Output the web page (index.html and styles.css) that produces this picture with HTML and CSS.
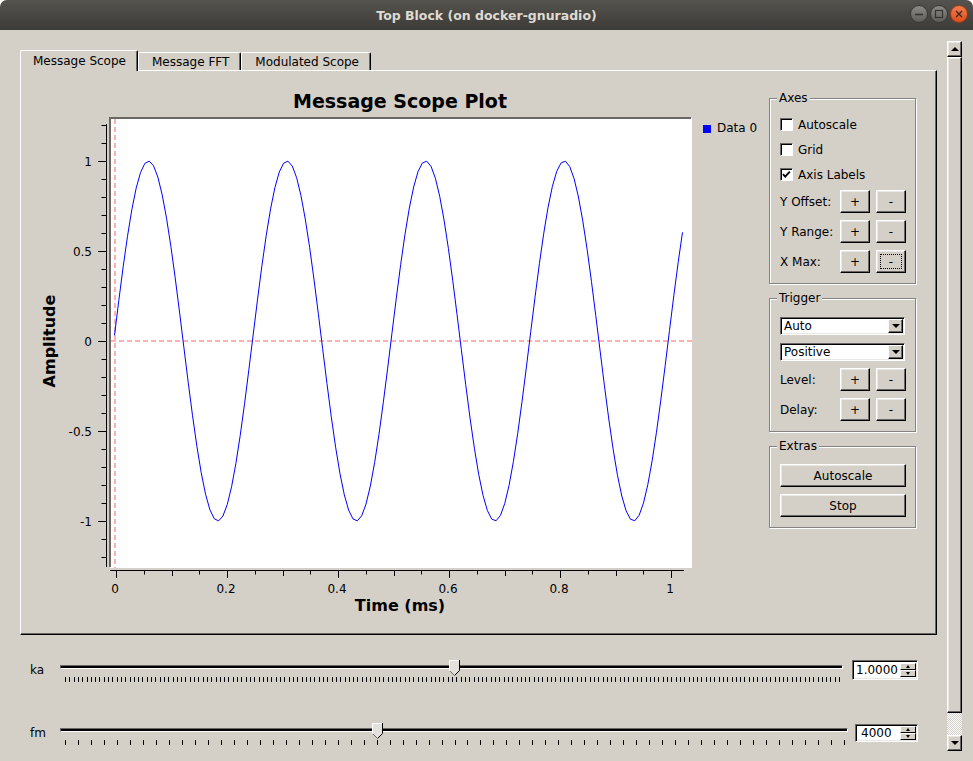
FILE: index.html
```html
<!DOCTYPE html>
<html lang="en">
<head>
<meta charset="utf-8">
<title>Top Block (on docker-gnuradio)</title>
<link rel="stylesheet" href="styles.css">
</head>
<body>
<div class="window">
  <header class="titlebar">
    <span class="title">Top Block (on docker-gnuradio)</span>
    <div class="wm">
      <span class="wm-btn"><svg width="16" height="16" viewBox="0 0 16 16"><path d="M4 8.5H12" stroke="#34332f" stroke-width="1.5"/></svg></span>
      <span class="wm-btn"><svg width="16" height="16" viewBox="0 0 16 16"><rect x="4.5" y="4.5" width="7" height="7" fill="none" stroke="#34332f" stroke-width="1.2"/></svg></span>
      <span class="wm-btn wm-close"><svg width="16" height="16" viewBox="0 0 16 16"><path d="M5 5L11 11M11 5L5 11" stroke="#3c2a22" stroke-width="1.4"/></svg></span>
    </div>
  </header>
  <div class="client">
    <main class="content">
      <div class="tabs">
        <div class="tab tab-active">Message Scope</div>
        <div class="tab">Message FFT</div>
        <div class="tab">Modulated Scope</div>
      </div>
      <section class="panel">
        <svg class="plot" viewBox="21 71 748 563" width="748" height="563" xmlns="http://www.w3.org/2000/svg">
          <text class="plot-title" x="400" y="108">Message Scope Plot</text>
          <rect x="110" y="118" width="582" height="450" fill="#ffffff"/>
          <path class="frame" d="M110 567V118H691"/>
          <line class="ref-line" x1="115" y1="119" x2="115" y2="568"/>
          <line class="ref-line" x1="111" y1="341" x2="692" y2="341"/>
          <polyline id="trace" class="trace" points=""/>
          <line class="axis" x1="106.5" y1="124" x2="106.5" y2="567"/>
          <g id="yticks" class="tick-marks"></g>
          <line class="axis" x1="110" y1="570.5" x2="684" y2="570.5"/>
          <g id="xticks" class="tick-marks"></g>
          <g class="ylab">
            <text x="92" y="165.5">1</text>
            <text x="92" y="255.5">0.5</text>
            <text x="92" y="345.5">0</text>
            <text x="92" y="435.5">-0.5</text>
            <text x="92" y="525.5">-1</text>
          </g>
          <g class="xlab">
            <text x="115" y="593">0</text>
            <text x="226" y="593">0.2</text>
            <text x="337" y="593">0.4</text>
            <text x="448" y="593">0.6</text>
            <text x="559" y="593">0.8</text>
            <text x="670" y="593">1</text>
          </g>
          <text class="axis-title" transform="translate(55 341) rotate(-90)">Amplitude</text>
          <text class="axis-title" x="400" y="611">Time (ms)</text>
          <rect x="703" y="125" width="8" height="8" fill="#0000ff"/>
          <text x="717" y="132">Data 0</text>
        </svg>
        <aside class="controls">
          <fieldset class="group group-axes">
            <legend>Axes</legend>
            <div class="check-row"><span class="check"></span>Autoscale</div>
            <div class="check-row"><span class="check"></span>Grid</div>
            <div class="check-row"><span class="check"><svg width="11" height="11" viewBox="0 0 11 11"><path d="M2 5.2L4.2 7.6L8.8 2.6" fill="none" stroke="#000" stroke-width="1.8"/></svg></span>Axis Labels</div>
            <div class="btn-rows">
              <div class="btn-row"><span class="row-label">Y Offset:</span><button class="btn btn-small">+</button><button class="btn btn-small">-</button></div>
              <div class="btn-row"><span class="row-label">Y Range:</span><button class="btn btn-small">+</button><button class="btn btn-small">-</button></div>
              <div class="btn-row"><span class="row-label">X Max:</span><button class="btn btn-small">+</button><button class="btn btn-small btn-focus">-</button></div>
            </div>
          </fieldset>
          <fieldset class="group group-trigger">
            <legend>Trigger</legend>
            <div class="stack">
              <div class="combo"><span class="combo-text">Auto</span><span class="combo-btn"><i class="arrow-down"></i></span></div>
              <div class="combo combo-second"><span class="combo-text">Positive</span><span class="combo-btn"><i class="arrow-down"></i></span></div>
              <div class="btn-row"><span class="row-label">Level:</span><button class="btn btn-small">+</button><button class="btn btn-small">-</button></div>
              <div class="btn-row"><span class="row-label">Delay:</span><button class="btn btn-small">+</button><button class="btn btn-small">-</button></div>
            </div>
          </fieldset>
          <fieldset class="group group-extras">
            <legend>Extras</legend>
            <div class="stack">
              <button class="btn btn-wide">Autoscale</button>
              <button class="btn btn-wide">Stop</button>
            </div>
          </fieldset>
        </aside>
      </section>
      <div class="sliders">
        <div class="slider-row">
          <span class="slider-label">ka</span>
          <div class="slider">
            <div class="groove"></div>
            <svg class="ticks ticks-ka" data-count="180" width="775" height="5"></svg>
            <svg class="thumb" style="left:49.7%" width="11" height="16" viewBox="0 0 11 16"><path d="M0.5 0.5H10.5V10.5L5.5 15.5L0.5 10.5Z" fill="#e4e1dc"/><path d="M0.5 10.5V0.5H10" fill="none" stroke="#fff"/><path d="M10.5 0V10.5L5.5 15.5" fill="none" stroke="#000"/><path d="M1 11L5 15" stroke="#6a6864"/></svg>
          </div>
          <div class="spin spin-ka"><span class="spin-value">1.0000</span><span class="spin-arrows"><span class="spin-arrow"><i class="arrow-up-s"></i></span><span class="spin-arrow"><i class="arrow-down-s"></i></span></span></div>
        </div>
        <div class="slider-row">
          <span class="slider-label">fm</span>
          <div class="slider">
            <div class="groove"></div>
            <svg class="ticks ticks-fm" data-count="60" width="780" height="5"></svg>
            <svg class="thumb" style="left:39.6%" width="11" height="16" viewBox="0 0 11 16"><path d="M0.5 0.5H10.5V10.5L5.5 15.5L0.5 10.5Z" fill="#e4e1dc"/><path d="M0.5 10.5V0.5H10" fill="none" stroke="#fff"/><path d="M10.5 0V10.5L5.5 15.5" fill="none" stroke="#000"/><path d="M1 11L5 15" stroke="#6a6864"/></svg>
          </div>
          <div class="spin spin-fm"><span class="spin-value">4000</span><span class="spin-arrows"><span class="spin-arrow"><i class="arrow-up-s"></i></span><span class="spin-arrow"><i class="arrow-down-s"></i></span></span></div>
        </div>
      </div>
    </main>
    <div class="vscroll">
      <span class="sb-btn"><i class="arrow-up"></i></span>
      <span class="sb-thumb"></span>
      <span class="sb-trough"></span>
      <span class="sb-btn"><i class="arrow-down"></i></span>
    </div>
  </div>
</div>
<script src="script.js"></script>
</body>
</html>
```

FILE: styles.css
```css
* { box-sizing: border-box; }
html { background: #ffffff; }
body {
  margin: 0;
  width: 973px;
  height: 761px;
  overflow: hidden;
  font-family: "DejaVu Sans", "Liberation Sans", sans-serif;
  font-size: 12px;
  color: #000;
}
.window {
  width: 973px;
  height: 761px;
  background: #d4d0c8;
  border-radius: 7px 7px 0 0;
  overflow: hidden;
  display: flex;
  flex-direction: column;
}
/* title bar */
.titlebar {
  flex: none;
  height: 30px;
  display: grid;
  grid-template-columns: 1fr auto 1fr;
  align-items: center;
  background: linear-gradient(#55534e, #3c3b37);
  color: #dfdbd2;
}
.title { grid-column: 2; font-weight: bold; font-size: 12.5px; }
.wm {
  grid-column: 3;
  justify-self: end;
  display: flex;
  gap: 2px;
  padding-right: 5px;
  margin-top: -2px;
}
.wm-btn {
  width: 18px;
  height: 18px;
  border-radius: 50%;
  border: 1px solid #3a3935;
  background: linear-gradient(#8c8a86, #5e5d59);
  display: flex;
}
.wm-btn svg { display: block; }
.wm-close { background: linear-gradient(#f37c4e, #de4e1a); border-color: #9c3a16; }

/* client */
.client { flex: 1; display: flex; min-height: 0; }
.content {
  flex: none;
  width: 937px;
  padding: 20px 0 0 20px;
  display: flex;
  flex-direction: column;
}
.tabs { flex: none; height: 20px; display: flex; align-items: flex-end; }
.tab {
  height: 18px;
  padding: 0 11px 0 13px;
  line-height: 18px;
  border: 1px solid #fff;
  border-bottom: none;
  border-right-color: #000;
  box-shadow: inset -1px 0 0 #6a6864;
  border-radius: 2px 2px 0 0;
  white-space: nowrap;
}
.tab-active {
  height: 21px;
  padding-left: 12px;
  line-height: 20px;
  margin-bottom: -1px;
  background: #d4d0c8;
  position: relative;
  z-index: 1;
}
.panel {
  flex: none;
  height: 565px;
  display: flex;
  border: 1px solid;
  border-color: #fff #000 #000 #fff;
  box-shadow: inset -1px -1px 0 #6a6864;
}

/* plot */
.plot { flex: none; display: block; width: 748px; height: 563px; }
.plot text { font-family: "DejaVu Sans", sans-serif; font-size: 12px; fill: #000; }
.plot .plot-title { font-size: 19px; font-weight: bold; text-anchor: middle; }
.plot .axis-title { font-size: 16px; font-weight: bold; text-anchor: middle; }
.ylab text { text-anchor: end; }
.xlab text { text-anchor: middle; }
.frame { fill: none; stroke: #6a6864; stroke-width: 2; }
.ref-line { stroke: #ffb0b0; stroke-width: 2; stroke-dasharray: 5 3; }
.trace { fill: none; stroke: #0000ff; stroke-width: 1; }
.axis { stroke: #000; stroke-width: 1; }
.tick-marks line { stroke: #000; stroke-width: 1; }

/* controls */
.controls {
  flex: none;
  width: 147px;
  margin-top: 20px;
  display: flex;
  flex-direction: column;
  gap: 7px;
}
.group {
  margin: 0;
  min-width: 0;
  padding: 7px 9px 10px 10px;
  border: 1px solid #858380;
  box-shadow: inset 1px 1px 0 #fff, 1px 1px 0 #fff;
}
.group legend {
  margin-left: -3px;
  padding: 0 2px;
  line-height: 14px;
  background: #d4d0c8;
}
.group-trigger { padding-top: 12px; }
.group-extras { padding-top: 11px; }
.check-row { display: flex; align-items: center; gap: 5px; height: 25px; }
.check {
  flex: none;
  width: 13px;
  height: 13px;
  background: #fff;
  border: 1px solid;
  border-color: #6a6864 #fff #fff #6a6864;
  box-shadow: inset 1px 1px 0 #000;
  display: flex;
}
.check svg { display: block; }
.btn-rows { display: flex; flex-direction: column; gap: 7px; margin-top: 3px; }
.btn-row { display: flex; align-items: center; gap: 6px; height: 23px; }
.row-label { width: 54px; white-space: nowrap; }
.stack { display: flex; flex-direction: column; gap: 7px; }
.btn {
  font: inherit;
  color: #000;
  background: #d4d0c8;
  margin: 0;
  padding: 0;
  height: 23px;
  border: 1px solid;
  border-color: #fff #000 #000 #fff;
  box-shadow: inset -1px -1px 0 #6a6864, inset 1px 1px 0 #e9e7e3;
  border-radius: 0;
}
.btn-small { width: 30px; }
.btn-wide { width: 126px; }
.btn-focus { outline: 1px dotted #000; outline-offset: -5px; }
.combo {
  width: 125px;
  height: 18px;
  display: flex;
  align-items: center;
  padding: 0 1px 0 3px;
  background: #fff;
  border: 1px solid;
  border-color: #6a6864 #fff #fff #6a6864;
  box-shadow: inset 1px 1px 0 #000, inset -1px -1px 0 #e9e7e3;
}
.combo-second { margin-top: 1px; }
.combo-text { flex: 1; }
.combo-btn {
  width: 15px;
  height: 14px;
  display: flex;
  align-items: center;
  justify-content: center;
  background: #d4d0c8;
  border: 1px solid;
  border-color: #fff #000 #000 #fff;
  box-shadow: inset -1px -1px 0 #6a6864;
}
.arrow-down, .arrow-up { display: block; width: 0; height: 0; border-left: 4px solid transparent; border-right: 4px solid transparent; }
.arrow-down { border-top: 4px solid #000; }
.arrow-up { border-bottom: 4px solid #000; }
.arrow-up-s, .arrow-down-s { display: block; width: 0; height: 0; border-left: 2.5px solid transparent; border-right: 2.5px solid transparent; }
.arrow-up-s { border-bottom: 3px solid #000; }
.arrow-down-s { border-top: 3px solid #000; }

/* sliders */
.sliders { display: flex; flex-direction: column; gap: 41px; padding-top: 25px; }
.slider-row { display: flex; align-items: flex-start; padding: 0 19px 0 10px; }
.slider-label { flex: none; width: 30px; line-height: 20px; }
.slider { flex: 1; position: relative; height: 22px; }
.groove {
  margin-top: 5px;
  height: 4px;
  background: #000;
  border: 1px solid;
  border-color: #6a6864 #fff #fff #6a6864;
}
.ticks { display: block; margin: 8px 0 0 5px; }
.ticks line { stroke: #000; stroke-width: 1; }
.thumb { position: absolute; top: 0; display: block; }
.spin {
  flex: none;
  display: flex;
  align-items: center;
  height: 20px;
  background: #fff;
  border: 1px solid;
  border-color: #6a6864 #fff #fff #6a6864;
  box-shadow: inset 1px 1px 0 #000, inset -1px -1px 0 #e9e7e3;
  padding: 0 1px 0 3px;
}
.spin-ka { width: 66px; margin-left: 9px; }
.spin-fm { width: 63px; height: 18px; margin: 1px 0 0 7px; padding-left: 5px; }
.spin-value { flex: 1; line-height: 14px; }
.spin-arrows { flex: none; display: flex; flex-direction: column; width: 16px; }
.spin-arrow {
  height: 7px;
  display: flex;
  align-items: center;
  justify-content: center;
  background: #d4d0c8;
  border: 1px solid;
  border-color: #fff #000 #000 #fff;
}

/* scrollbar */
.vscroll {
  flex: none;
  width: 15px;
  height: 710px;
  margin: 11px 0 0 10px;
  display: flex;
  flex-direction: column;
}
.sb-btn, .sb-thumb {
  flex: none;
  background: #d4d0c8;
  border: 1px solid;
  border-color: #fff #000 #000 #fff;
  box-shadow: inset -1px -1px 0 #6a6864, inset 1px 1px 0 #e9e7e3;
}
.sb-btn { height: 16px; display: flex; align-items: center; justify-content: center; }
.sb-thumb { height: 656px; }
.sb-trough {
  flex: 1;
  background: repeating-conic-gradient(#fff 0 25%, #d4d0c8 0 50%) 0 0 / 2px 2px;
}
```

FILE: script.js
```js
(function () {
  var NS = 'http://www.w3.org/2000/svg';
  function el(parent, name, attrs) {
    var e = document.createElementNS(NS, name);
    for (var k in attrs) e.setAttribute(k, attrs[k]);
    parent.appendChild(e);
    return e;
  }
  var yt = document.getElementById('yticks');
  for (var i = -12; i <= 12; i++) {
    var y = 341 - 18 * i + 0.5;
    el(yt, 'line', { x1: i % 5 === 0 ? 98 : 101.5, y1: y, x2: 107, y2: y });
  }
  var xt = document.getElementById('xticks');
  for (var k = 0; k <= 20; k++) {
    var x = Math.round(116 + 27.75 * k) + 0.5;
    var len = k % 4 === 0 ? 7 : (k % 2 === 0 ? 5 : 3.5);
    el(xt, 'line', { x1: x, y1: 570, x2: x, y2: 571 + len });
  }
  var pts = [];
  var period = 138.6;
  var x0 = 114.5, x1 = 682.5, steps = 131;
  for (var s = 0; s <= steps; s++) {
    var px = x0 + (x1 - x0) * s / steps;
    var v = Math.sin(2 * Math.PI * (px - 113.8) / period);
    pts.push(px.toFixed(2) + ',' + (341 - 180 * v).toFixed(2));
  }
  document.getElementById('trace').setAttribute('points', pts.join(' '));

  var tickBars = document.querySelectorAll('svg.ticks');
  for (var t = 0; t < tickBars.length; t++) {
    var bar = tickBars[t];
    var n = parseInt(bar.getAttribute('data-count'), 10);
    var w = parseFloat(bar.getAttribute('width')) - 1;
    for (var j = 0; j <= n; j++) {
      var tx = Math.round(j * w / n) + 0.5;
      el(bar, 'line', { x1: tx, y1: 0, x2: tx, y2: 5 });
    }
  }
})();
```
